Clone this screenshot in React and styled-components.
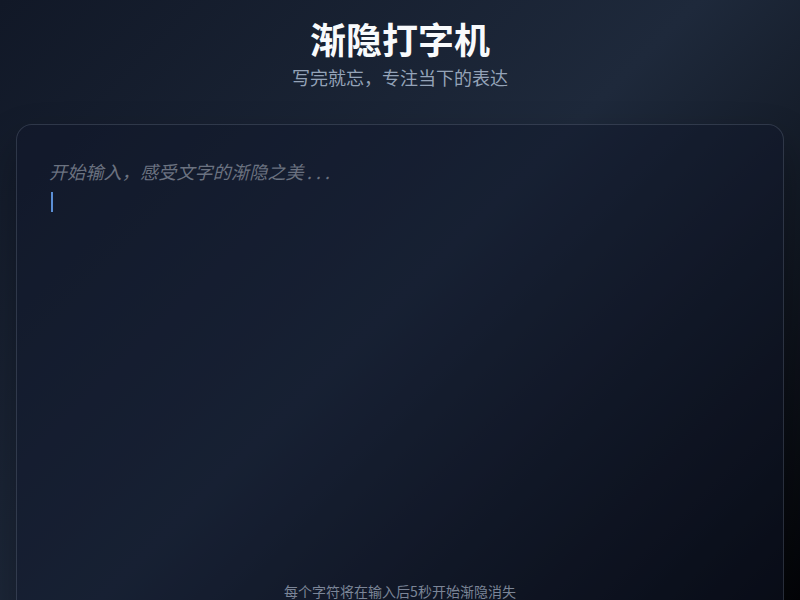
import React from "react";
import styled, { createGlobalStyle } from "styled-components";

const GlobalStyle = createGlobalStyle`
  html, body {
    margin: 0;
    padding: 0;
    height: 100%;
  }
  body {
    font-family: "Noto Sans CJK SC", "Noto Sans", sans-serif;
    background: linear-gradient(135deg, #111827 0%, #1e293b 50%, #030407 100%);
    background-attachment: fixed;
    min-height: 100vh;
    overflow: hidden;
  }
`;

const Page = styled.div`
  box-sizing: border-box;
  height: 600px;
  padding: 14px 16px 0;
  display: flex;
  flex-direction: column;
  overflow: hidden;
`;

const Header = styled.header`
  display: flex;
  flex-direction: column;
  align-items: center;
  margin-bottom: 32px;
`;

const Title = styled.h1`
  margin: 0;
  font-size: 36px;
  font-weight: 700;
  line-height: 48px;
  color: #f8fafc;
`;

const Subtitle = styled.p`
  margin: 0;
  font-size: 18px;
  line-height: 30px;
  color: #94a3b8;
`;

const Card = styled.section`
  box-sizing: border-box;
  flex: none;
  padding: 32px 32px 32px;
  border: 1px solid rgba(148, 163, 184, 0.22);
  border-radius: 16px;
  background: rgba(15, 23, 42, 0.45);
  box-shadow: 0 20px 40px rgba(0, 0, 0, 0.3);
`;

const Editor = styled.div`
  min-height: 410px;
  font-size: 18px;
  line-height: 29px;
`;

const Placeholder = styled.div`
  font-style: italic;
  color: #6b7280;
  letter-spacing: 0.2px;
`;

const Dots = styled.span`
  letter-spacing: 4px;
  margin-left: 3px;
`;

const Cursor = styled.span`
  display: inline-block;
  width: 2px;
  height: 20px;
  margin: 6px 0 0 2px;
  background: #5b8fd6;
  vertical-align: top;
`;

const Hint = styled.p`
  margin: 14px 0 0;
  font-size: 14px;
  line-height: 20px;
  text-align: center;
  color: #7b8597;
`;

export default function App() {
  return (
    <>
      <GlobalStyle />
      <Page>
        <Header>
          <Title>渐隐打字机</Title>
          <Subtitle>写完就忘，专注当下的表达</Subtitle>
        </Header>
        <Card>
          <Editor>
            <Placeholder>
              开始输入，感受文字的渐隐之美<Dots>...</Dots>
            </Placeholder>
            <Cursor />
          </Editor>
          <Hint>每个字符将在输入后5秒开始渐隐消失</Hint>
        </Card>
      </Page>
    </>
  );
}
